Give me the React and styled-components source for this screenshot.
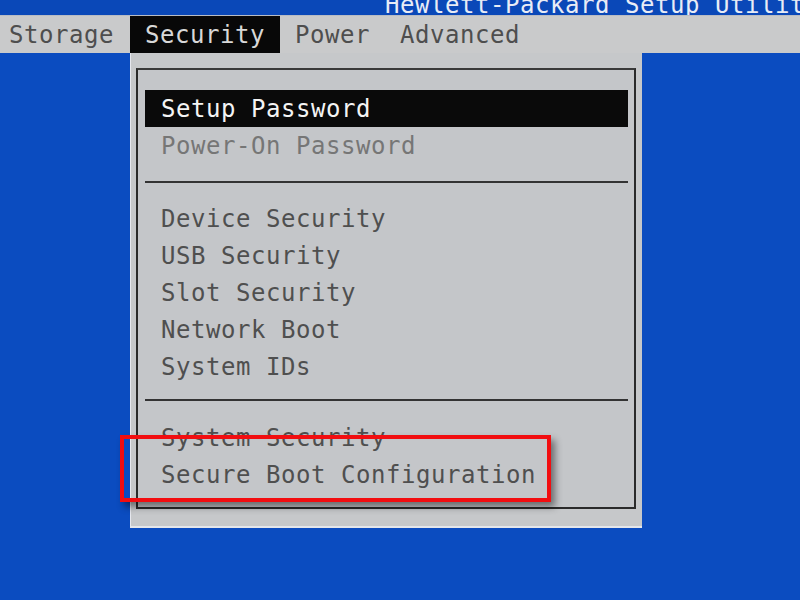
import styled, { createGlobalStyle } from "styled-components";

const GlobalStyle = createGlobalStyle`
    html, body {
        margin: 0;
        padding: 0;
        background: #0b4cc0;
    }
    body {
        font-family: "DejaVu Sans Mono", "Liberation Mono", monospace;
    }
`

const Screen = styled.div`
    position: relative;
    width: 800px;
    height: 600px;
    overflow: hidden;
    background: #0b4cc0;
    font-family: "DejaVu Sans Mono", "Liberation Mono", monospace;
    font-size: 24px;
    letter-spacing: 0.55px;
`

const TitleBar = styled.div`
    height: 15px;
    overflow: hidden;
    display: flex;
    align-items: flex-end;
    background: #0a48b8;
    padding-left: 385px;
`

const TitleText = styled.div`
    color: #e8ecf6;
    line-height: 24px;
    white-space: nowrap;
    margin-bottom: -2px;
`

const MenuBar = styled.div`
    display: flex;
    height: 37px;
    background: #c9cacb;
    border-top: 1px solid #b8bcc4;
`

const Tab = styled.div`
    display: flex;
    align-items: center;
    padding: 0 15px;
    height: 100%;
    color: ${props => props.active ? "#d8d8d8" : "#4e4e4e"};
    background: ${props => props.active ? "#080808" : "transparent"};
    white-space: nowrap;

    &:first-child {
        padding-left: 9px;
        padding-right: 16px;
    }
`

const Dropdown = styled.div`
    width: 512px;
    margin-left: 130px;
    box-sizing: border-box;
    padding: 15px 6px 17px 5px;
    background: #c6c8ca;
    border-left: 1px solid #e6e8ee;
    border-bottom: 2px solid #e4e6ea;
`

const Frame = styled.div`
    border: 2px solid #2a2a2a;
    border-top-color: #3a3a3a;
    padding: 20px 6px 14px 7px;
    background: #c4c6c9;
`

const Item = styled.div`
    height: 37px;
    display: flex;
    align-items: center;
    padding-left: 16px;
    color: ${props => props.selected ? "#f4f4f4" : props.faint ? "#767676" : "#4f4f4f"};
    background: ${props => props.selected ? "#0a0a0a" : "transparent"};
    white-space: nowrap;
`

const Divider = styled.div`
    height: 2px;
    background: #333;
    margin: ${props => props.gap || "17px 0 17px"};
`

const Highlight = styled.div`
    position: absolute;
    left: 120px;
    top: 435px;
    width: 431px;
    height: 67px;
    box-sizing: border-box;
    border: 4px solid #f20d10;
    box-shadow: 4px 5px 7px rgba(0, 0, 0, 0.45);
`

const tabs = ["Storage", "Security", "Power", "Advanced"];

export default function App() {
    return (
        <Screen>
            <GlobalStyle />
            <TitleBar>
                <TitleText>Hewlett-Packard Setup Utility</TitleText>
            </TitleBar>
            <MenuBar>
                {tabs.map(t => (
                    <Tab key={t} active={t === "Security"}>{t}</Tab>
                ))}
            </MenuBar>
            <Dropdown>
                <Frame>
                    <Item selected>Setup Password</Item>
                    <Item faint>Power-On Password</Item>
                    <Divider />
                    <Item>Device Security</Item>
                    <Item>USB Security</Item>
                    <Item>Slot Security</Item>
                    <Item>Network Boot</Item>
                    <Item>System IDs</Item>
                    <Divider gap="14px 0 18px" />
                    <Item>System Security</Item>
                    <Item>Secure Boot Configuration</Item>
                </Frame>
            </Dropdown>
            <Highlight />
        </Screen>
    );
}
